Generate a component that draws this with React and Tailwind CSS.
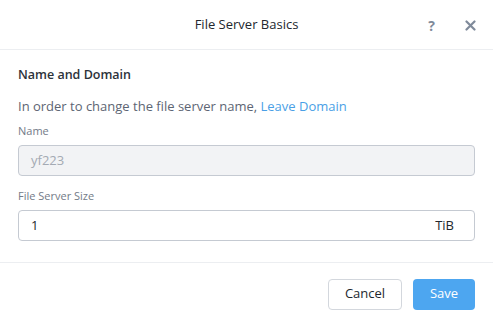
export default function App() {
  return (
    <div className="w-[493px] h-[325px] bg-white flex flex-col text-[#22272e]" style={{ fontFamily: '"Open Sans", "Lato", sans-serif' }}>
      <div className="h-[50px] shrink-0 flex items-center relative border-b border-[#eceef1]">
        <div className="flex-1 text-center text-[13px] text-[#22272e]">File Server Basics</div>
        <div className="absolute right-[17px] top-0 h-[50px] flex items-center gap-[30px]">
          <span className="text-[14px] font-bold text-[#7f8a9a]">?</span>
          <svg width="11" height="11" viewBox="0 0 11 11">
            <path d="M1.5 1.5 L9.5 9.5 M9.5 1.5 L1.5 9.5" stroke="#7f8a9a" strokeWidth="2.2" strokeLinecap="round" />
          </svg>
        </div>
      </div>
      <div className="flex-1 px-[18px] pt-[17px] border-b border-[#eceef1]">
        <div className="text-[12.5px] font-semibold text-[#2c323a] leading-[16px]">Name and Domain</div>
        <div className="mt-[15px] text-[13px] text-[#5d6573] leading-[16px]">
          In order to change the file server name, <span className="text-[#4a9fe6]">Leave Domain</span>
        </div>
        <div className="mt-[10px] text-[11px] text-[#737b88] leading-[14px]">Name</div>
        <div className="mt-[7px] h-[31px] rounded-[4px] border border-[#c5cad2] bg-[#f2f3f5] flex items-center px-[12px] text-[13px] text-[#a4aab3]">yf223</div>
        <div className="mt-[13px] text-[11px] text-[#737b88] leading-[14px]">File Server Size</div>
        <div className="mt-[7px] h-[31px] rounded-[4px] border border-[#c5cad2] bg-white flex items-center justify-between pl-[12px] pr-[20px] text-[13px] text-[#22272e]">
          <span>1</span>
          <span>TiB</span>
        </div>
      </div>
      <div className="h-[62px] shrink-0 flex items-center justify-end gap-[11px] px-[18px]">
        <button className="w-[74px] h-[31px] rounded-[4px] border border-[#d3d7dd] bg-white text-[13px] text-[#22272e]">Cancel</button>
        <button className="w-[62px] h-[31px] rounded-[4px] bg-[#4da6f0] text-[13px] text-white">Save</button>
      </div>
    </div>
  );
}
